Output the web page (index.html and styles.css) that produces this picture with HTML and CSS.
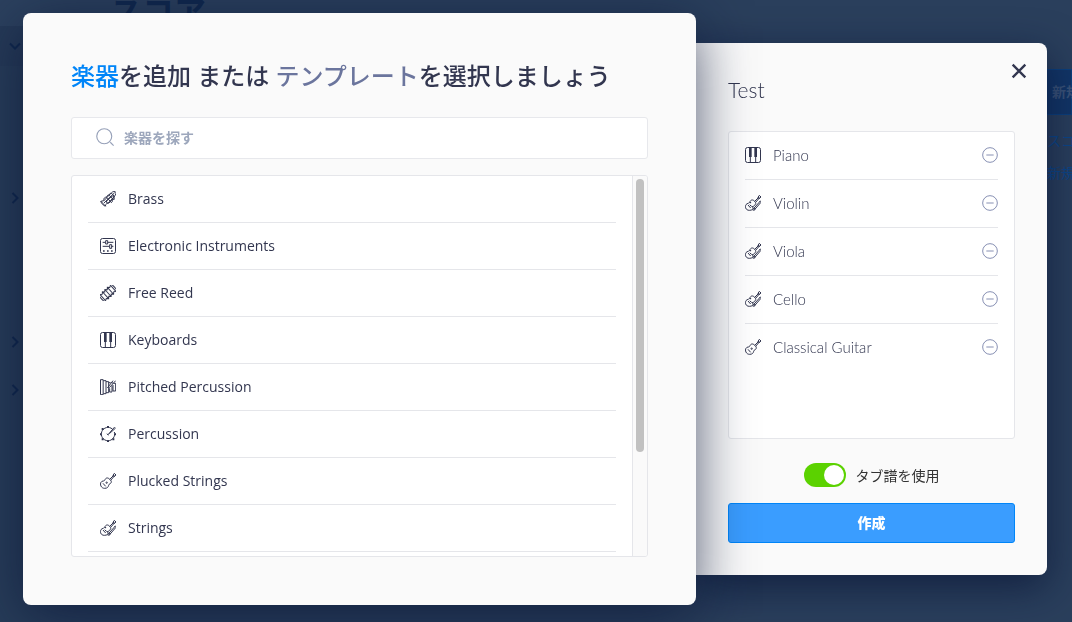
FILE: index.html
```html
<!DOCTYPE html>
<html lang="ja">
<head>
<meta charset="utf-8">
<title>スコア</title>
<meta name="viewport" content="width=device-width, initial-scale=1">
<link rel="stylesheet" href="styles.css">
</head>
<body>
<svg class="sprite" aria-hidden="true">
  <symbol id="keys" viewBox="0 0 48 48">
    <rect x="1.5" y="1.5" width="45" height="45" rx="6"/>
    <path class="solid" d="M12 2h8v28h-8zM28 2h8v28h-8z"/>
    <path d="M16 30v16M32 30v16"/>
  </symbol>
  <symbol id="brass" viewBox="0 0 48 48">
    <path d="M2 30l15 16M3 30c-2 4 9 16 13 15M4 30c8 1 12-4 17-11L34 6c5-6 11-5 13-3s1 8-4 13L29 32c-6 5-13 6-13 13"/>
    <path d="M12 28c-3-7 6-12 9-8l13 15c5-4 4-8 1-11M20 19c0-6 6-9 9-5l12 13c3-4 2-7 0-9M27 12c2-6 8-7 11-2l6 8M12 36L44 5"/>
    <path d="M20 30c-3 4 3 9 7 6l13-14c4-4-1-9-5-6z"/>
  </symbol>
  <symbol id="electronic" viewBox="0 0 48 48">
    <rect x="1.5" y="1.5" width="45" height="45" rx="6"/>
    <path d="M8 13h8M24 13h16M8 25h20M35 25h5M17 8h6v10h-6zM29 20h6v11h-6z"/>
    <path class="solid" d="M9 37h5v4H9zM21 37h5v4h-5zM33 37h5v4h-5z"/>
  </symbol>
  <symbol id="reed" viewBox="0 0 48 48">
    <g transform="rotate(-42 24 24)">
      <path d="M3 11H0c-3 3-3 23 0 26h3zM45 11h3c3 3 3 23 0 26h-3z"/>
      <path d="M3 12l6 3 5-5 5 5 5-5 5 5 5-5 5 5 6-3M3 36l6-3 5 5 5-5 5 5 5-5 5 5 5-5 6 3M14 10v28M24 10v28M34 10v28"/>
    </g>
  </symbol>
  <symbol id="pitched" viewBox="0 0 48 48">
    <path d="M1.5 2h8v45h-8zM10 5h8v39h-8M18 8h8v33h-8M29 28v11h7V20M39 18v18h8V13h-5M26 11h6"/>
    <path d="M22 27L39 5M28 26L47 5M35 11l6 2"/>
  </symbol>
  <symbol id="drum" viewBox="0 0 48 48">
    <path d="M37 9a20 20 0 1 0 6 9"/>
    <path class="solid" d="M21 0h6v5h-6zM21 43h6v5h-6zM0 22h5v6H0zM43 22h5v6h-5zM5 6h6v6H5zM5 37h6v6H5zM37 37h6v6h-6z"/>
    <path d="M23 27L44 3M28 23L47 6M21 23l4 5"/>
  </symbol>
  <symbol id="guitar" viewBox="0 0 48 48">
    <path d="M29 19c-6-7-12-4-14 1-1 3-3 4-6 4-12 2-9 22 5 22 8 0 11-4 12-9 1-3 2-4 4-5 5-2 6-8-1-13z"/>
    <circle cx="20" cy="29" r="2"/>
    <path d="M9 31l8 9M29 19L42 6M32 22L44 8M39 7l4-6 5 5-6 5z"/>
  </symbol>
  <symbol id="strings" viewBox="0 0 48 48">
    <path d="M29 19c-6-7-12-4-14 1l3 4c-4-3-7-1-8 1-12 1-12 21 3 21 9 0 12-4 11-9l-4-3c4 2 7 0 8-3 5-2 6-8 1-12z"/>
    <path d="M9 30l8 9M14 29l5 5M29 19L42 6M32 22L44 8M39 7l4-6 5 5-6 5z"/>
    <path d="M47 17L23 44M47 23L27 46M23 45h6M44 18l4 5M27 39l5 3"/>
  </symbol>
  <symbol id="minus" viewBox="0 0 48 48">
    <circle cx="24" cy="24" r="22"/><path d="M13 24h22"/>
  </symbol>
  <symbol id="right" viewBox="0 0 48 48"><path d="M14 4l20 20-20 20"/></symbol>
  <symbol id="down" viewBox="0 0 48 48"><path d="M4 14l20 20 20-20"/></symbol>
</svg>

<div class="page" inert>
  <nav class="sidebar">
    <div class="nav-top"></div>
    <div class="nav-row current"><svg class="chevron"><use href="#down"/></svg></div>
    <div class="nav-row first"><svg class="chevron"><use href="#right"/></svg></div>
    <div class="nav-row"></div>
    <div class="nav-row"></div>
    <div class="nav-row"><svg class="chevron"><use href="#right"/></svg></div>
    <div class="nav-row"><svg class="chevron"><use href="#right"/></svg></div>
  </nav>
  <main><h1 class="page-title">スコア</h1></main>
  <aside class="actions">
    <button class="new-score" type="button">新規</button>
    <a class="action-link" href="#">スコ</a>
    <a class="action-link" href="#">新規</a>
  </aside>
</div>

<div class="overlay">
  <section class="picker" aria-labelledby="picker-title">
    <h2 class="picker-title" id="picker-title"><a class="tab active" href="#">楽器</a>を追加 または <a class="tab" href="#">テンプレート</a>を選択しましょう</h2>
    <label class="search">
      <svg class="search-icon" viewBox="0 0 48 48" aria-hidden="true"><circle cx="22" cy="22" r="20"/><path d="M38 38l9 9"/></svg>
      <input class="search-input" type="search" placeholder="楽器を探す" aria-label="楽器を探す">
    </label>
    <div class="catalog">
      <ul class="families">
        <li><button class="family" type="button"><svg class="icon"><use href="#brass"/></svg>Brass</button></li>
        <li><button class="family" type="button"><svg class="icon"><use href="#electronic"/></svg>Electronic Instruments</button></li>
        <li><button class="family" type="button"><svg class="icon"><use href="#reed"/></svg>Free Reed</button></li>
        <li><button class="family" type="button"><svg class="icon"><use href="#keys"/></svg>Keyboards</button></li>
        <li><button class="family" type="button"><svg class="icon"><use href="#pitched"/></svg>Pitched Percussion</button></li>
        <li><button class="family" type="button"><svg class="icon"><use href="#drum"/></svg>Percussion</button></li>
        <li><button class="family" type="button"><svg class="icon"><use href="#guitar"/></svg>Plucked Strings</button></li>
        <li><button class="family" type="button"><svg class="icon"><use href="#strings"/></svg>Strings</button></li>
      </ul>
      <div class="track"><div class="thumb"></div></div>
    </div>
  </section>

  <section class="score" aria-labelledby="score-title">
    <button class="close" type="button" aria-label="閉じる"><svg class="close-icon" viewBox="0 0 48 48"><path d="M5 5l38 38M43 5L5 43"/></svg></button>
    <h2 class="score-title" id="score-title">Test</h2>
    <ul class="parts">
      <li class="part"><svg class="icon"><use href="#keys"/></svg><span class="part-name">Piano</span><button class="remove" type="button" aria-label="Piano を削除"><svg><use href="#minus"/></svg></button></li>
      <li class="part"><svg class="icon"><use href="#strings"/></svg><span class="part-name">Violin</span><button class="remove" type="button" aria-label="Violin を削除"><svg><use href="#minus"/></svg></button></li>
      <li class="part"><svg class="icon"><use href="#strings"/></svg><span class="part-name">Viola</span><button class="remove" type="button" aria-label="Viola を削除"><svg><use href="#minus"/></svg></button></li>
      <li class="part"><svg class="icon"><use href="#strings"/></svg><span class="part-name">Cello</span><button class="remove" type="button" aria-label="Cello を削除"><svg><use href="#minus"/></svg></button></li>
      <li class="part"><svg class="icon"><use href="#guitar"/></svg><span class="part-name">Classical Guitar</span><button class="remove" type="button" aria-label="Classical Guitar を削除"><svg><use href="#minus"/></svg></button></li>
    </ul>
    <label class="tab-option"><input class="switch" type="checkbox" checked>タブ譜を使用</label>
    <button class="create" type="button">作成</button>
  </section>
</div>
</body>
</html>
```
FILE: styles.css
```css
*, *::before, *::after { box-sizing: border-box; }

body {
  margin: 0;
  min-height: 100vh;
  overflow: hidden;
  background: #2a3f5c;
  color: #32364f;
  font-family: "Open Sans", "Noto Sans CJK JP", sans-serif;
  font-size: 14px;
}

h1, h2, ul { margin: 0; padding: 0; }
ul { list-style: none; }
a { text-decoration: none; }
button { margin: 0; padding: 0; border: 0; background: none; color: inherit; font: inherit; cursor: pointer; }
svg { fill: none; stroke: currentColor; stroke-width: 3; }
.sprite { display: none; }
.solid { fill: currentColor; stroke: none; }
.icon { flex: none; width: 16px; height: 16px; }

/* Dimmed page behind the dialogs */
.page {
  display: grid;
  grid-template-columns: 40px 1fr 60px;
  min-height: 100vh;
  color: #10284d;
}
.sidebar { background: #283d59; }
.nav-top { height: 26px; background: #2c415e; }
.nav-row { display: flex; align-items: center; height: 48px; padding-left: 9px; }
.nav-row.current { height: 40px; background: #263a57; }
.nav-row.first { margin-top: 108px; }
.chevron { width: 12px; height: 12px; stroke-width: 8; }
.page-title { padding-left: 70px; font-size: 32px; line-height: 24px; font-weight: 700; }
.actions { display: flex; flex-direction: column; padding-top: 69px; overflow: hidden; white-space: nowrap; }
.new-score {
  height: 46px;
  margin-bottom: 10px;
  padding: 0 0 2px 39px;
  border: 1px solid #0b3f7c;
  background: #123566;
  color: #3a5378;
  font-weight: 700;
  text-align: left;
}
.action-link { padding-left: 35px; line-height: 32px; color: #0c4688; }

/* Dialogs */
.overlay {
  position: fixed;
  inset: 0;
  display: flex;
  align-items: center;
  justify-content: center;
  padding: 0 25px 4px 23px;
}
.picker, .score { background: #fafafa; }
.picker {
  position: relative;
  z-index: 1;
  flex: 0 1 673px;
  min-width: 0;
  padding: 48px;
  border-radius: 8px;
  box-shadow: 0 12px 56px rgba(8, 20, 52, .7);
}
.picker-title { margin-bottom: 26px; font-size: 24px; line-height: 30px; font-weight: 500; white-space: nowrap; }
.tab { color: #6b759d; }
.tab.active { color: #0085f8; }

.search {
  display: flex;
  align-items: center;
  gap: 10px;
  height: 42px;
  margin-bottom: 16px;
  padding: 0 24px 2px;
  border: 1px solid #e7e8ec;
  border-radius: 3px;
  background: #fff;
}
.search-icon { flex: none; width: 18px; height: 18px; color: #96a0b8; }
.search-input {
  flex: 1;
  min-width: 0;
  padding: 0;
  border: 0;
  outline: 0;
  background: none;
  color: inherit;
  font: 700 14px "Open Sans", "Noto Sans CJK JP", sans-serif;
}
.search-input::placeholder { color: #9da7bc; opacity: 1; }

.catalog {
  display: flex;
  height: 382px;
  overflow: hidden;
  border: 1px solid #e5e6ea;
  border-radius: 3px;
  background: #fff;
}
.families { flex: 1; padding: 0 16px; }
.family {
  display: flex;
  align-items: center;
  gap: 12px;
  width: 100%;
  height: 47px;
  padding: 0 0 1px 12px;
  border-bottom: 1px solid #e5e6ea;
  text-align: left;
}
.track { width: 15px; padding: 3px; border-left: 1px solid #e5e6ea; background: #fafafa; }
.thumb { width: 8px; height: 73%; border-radius: 4px; background: #c1c1c1; }

.score {
  position: relative;
  flex: 0 1 351px;
  min-width: 0;
  padding: 32px;
  border-radius: 0 8px 8px 0;
  box-shadow: 0 12px 40px rgba(8, 20, 52, .7);
}
.close { position: absolute; top: 18px; right: 18px; width: 20px; height: 20px; display: grid; place-items: center; }
.close-icon { width: 16px; height: 16px; stroke-width: 7; }
.score-title { margin-bottom: 26px; font-family: Lato, sans-serif; font-size: 21px; line-height: 30px; font-weight: 300; }
.parts {
  min-height: 308px;
  margin-bottom: 24px;
  padding: 0 16px;
  border: 1px solid #e5e6ea;
  border-radius: 3px;
  background: #fff;
}
.part {
  display: flex;
  align-items: center;
  gap: 12px;
  height: 48px;
  padding-bottom: 2px;
  border-bottom: 1px solid #e5e6ea;
}
.part:last-child { border-bottom-color: transparent; }
.part-name { flex: 1; font-family: Lato, sans-serif; font-size: 15px; font-weight: 300; }
.remove { display: flex; color: #8790b3; }
.remove svg { width: 16px; height: 16px; }

.tab-option {
  display: flex;
  align-items: center;
  justify-content: center;
  gap: 10px;
  height: 24px;
  margin-bottom: 16px;
  color: #333;
}
.switch {
  appearance: none;
  display: flex;
  width: 42px;
  height: 24px;
  margin: 0;
  padding: 2px;
  border-radius: 12px;
  background: #b8bcc8;
}
.switch::before { content: ""; width: 20px; height: 20px; border-radius: 50%; background: #fff; }
.switch:checked { justify-content: flex-end; background: #5bd200; }
.create {
  display: block;
  width: 100%;
  height: 40px;
  padding-bottom: 2px;
  border: 1px solid #0085f8;
  border-radius: 3px;
  background: #3a9dff;
  color: #fff;
  font-weight: 900;
}
```
